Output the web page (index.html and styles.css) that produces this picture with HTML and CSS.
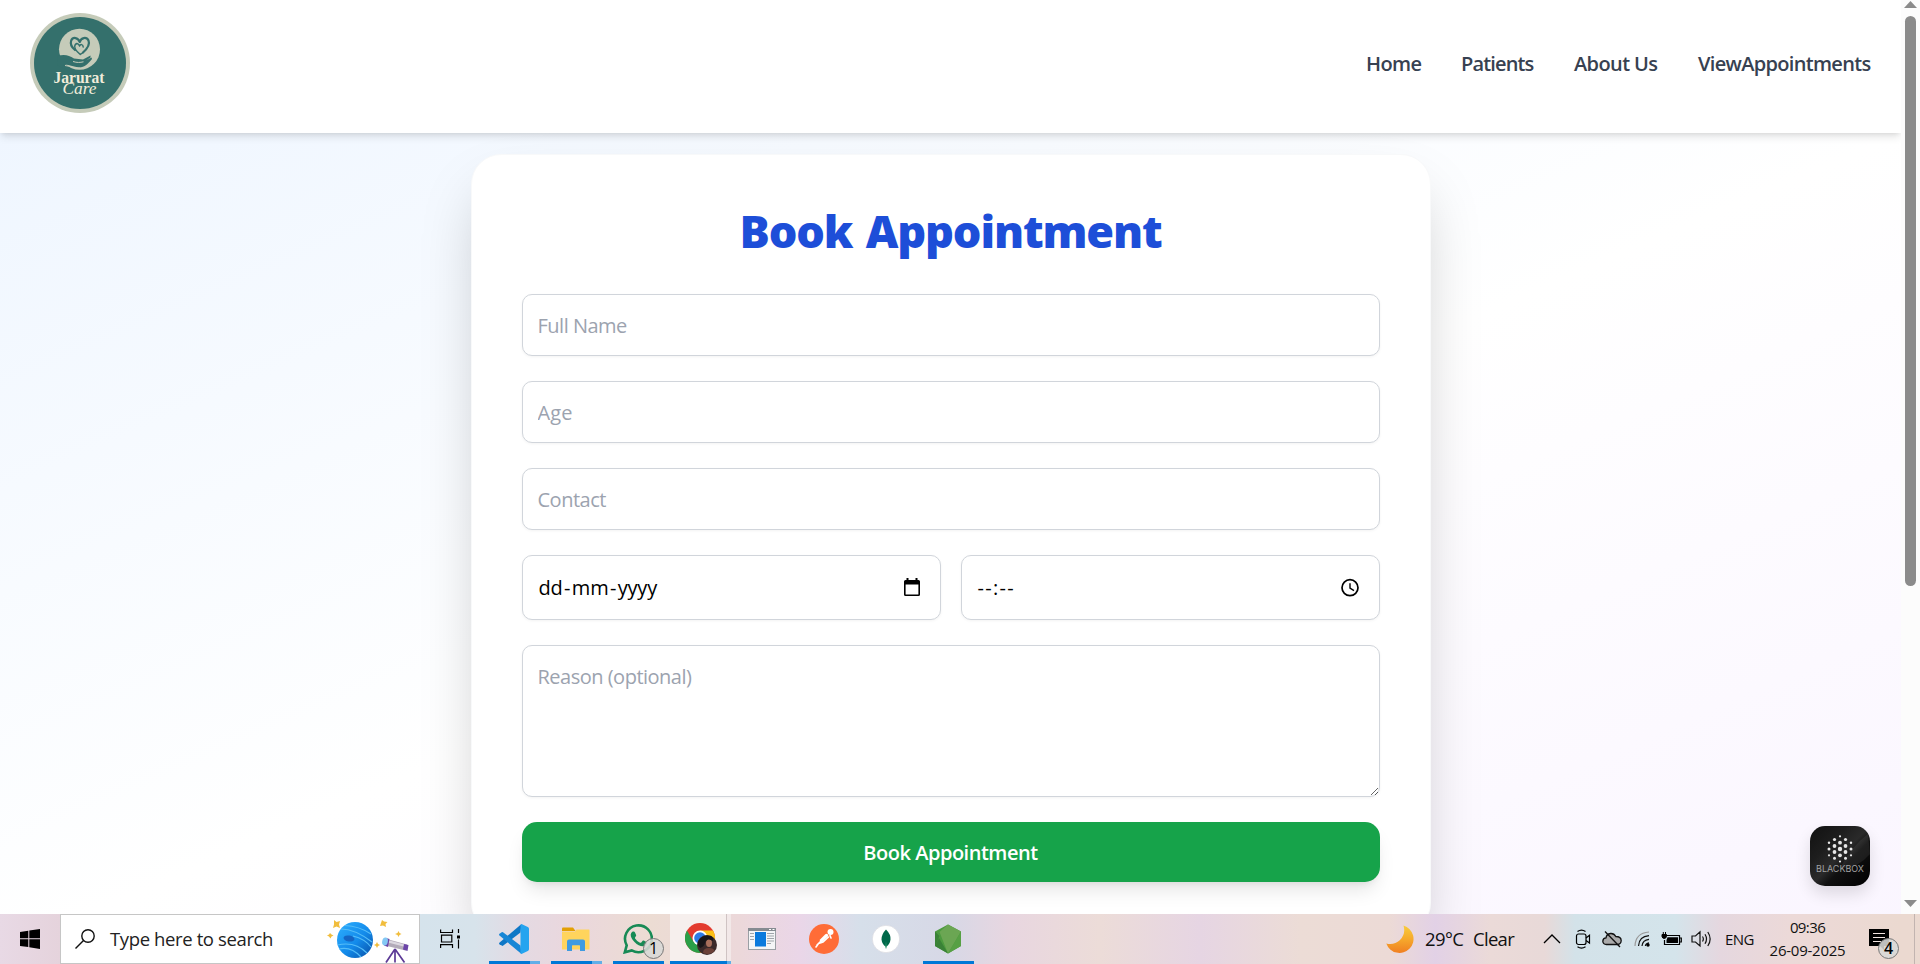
FILE: index.html
```html
<!DOCTYPE html>
<html lang="en">
<head>
<meta charset="utf-8">
<title>Jarurat Care</title>
<link rel="stylesheet" href="styles.css">
</head>
<body>
<div class="viewport">
  <div class="page">
    <header class="header">
      <svg class="logo" width="100" height="100" viewBox="0 0 100 100">
        <circle cx="50" cy="50" r="50" fill="#c5cbb9"/>
        <circle cx="50" cy="50" r="46" fill="#34706c"/>
        <circle cx="49.500" cy="36.300" r="20.500" fill="#c5cbb9"/>
        <g fill="none" stroke="#34706c" stroke-linecap="round" stroke-linejoin="round">
          <path stroke-width="2.200" d="M53 39.500C58 35 60 31 58.500 27.500C56.500 23.500 51 24.500 49.800 29C48 24.500 43 23.500 41.200 27.500C40 31 42 34.500 45 37"/>
          <path stroke-width="1.500" d="M53 39.500L50.300 41.500C45.500 37.500 43.500 34 45.300 31.500C47 29.700 49 31 49.600 33C50.500 31 53 31 53.200 34"/>
        </g>
        <path fill="#34706c" d="M28 42.500C36 41 39 42.500 44 45.500L53 46.500L60.500 42.500L60.500 44.500L56 47.500L61.500 44.500L62 46C58 51 55 54 49 54.500C42 53 38 51.500 33 51.500L35.500 56.500L27 52Z"/>
        <path fill="none" stroke="#c5cbb9" stroke-width="1" d="M43 48.500C47 49.800 50 49.600 53.500 48.800M35 52.500C40 53 44 55.500 50 55"/>
        <text class="logo-name" x="49" y="69.500" text-anchor="middle" textLength="51" lengthAdjust="spacingAndGlyphs">Jarurat</text>
        <text class="logo-care" x="49.500" y="80.800" text-anchor="middle" textLength="34" lengthAdjust="spacingAndGlyphs">Care</text>
      </svg>
      <nav class="nav">
        <a class="nav-home">Home</a><a class="nav-patients">Patients</a><a class="nav-about">About Us</a><a class="nav-view">ViewAppointments</a>
      </nav>
    </header>
    <main class="main">
      <form class="card">
        <h1 class="title">Book Appointment</h1>
        <input class="field" type="text" placeholder="Full Name">
        <input class="field field-age" type="text" placeholder="Age">
        <input class="field" type="text" placeholder="Contact">
        <div class="row">
          <div class="field picker">
            <span class="date-text">dd<span class="dash">-</span>mm<span class="dash">-</span>yyyy</span>
            <svg width="18" height="20" viewBox="0 0 18 20"><path fill="#000" fill-rule="evenodd" d="M3.500 0H5.500V2H12.500V0H14.500V2H15.500Q17 2 17 3.500V16.500Q17 18 15.500 18H2.500Q1 18 1 16.500V3.500Q1 2 2.500 2H3.500ZM2.600 6.500V16.400H15.400V6.500Z"/></svg>
          </div>
          <div class="field picker">
            <span class="time-text">--:--</span>
            <svg width="20" height="20" viewBox="0 0 20 20" fill="none" stroke="#000"><circle cx="10" cy="9.700" r="8" stroke-width="1.700"/><path stroke-width="1.400" d="M10 5.200V10.200L14 12.700"/></svg>
          </div>
        </div>
        <textarea class="field area" placeholder="Reason (optional)"></textarea>
        <button class="submit" type="button">Book Appointment</button>
      </form>
    </main>
    <div class="blackbox">
      <svg width="60" height="60" viewBox="0 0 60 60">
        <defs>
          <linearGradient id="bb" x1="0" y1="0" x2="1" y2="1"><stop offset="0" stop-color="#111"/><stop offset=".3" stop-color="#1d1d1d"/><stop offset=".5" stop-color="#2a2a2a"/><stop offset=".62" stop-color="#101010"/><stop offset="1" stop-color="#000"/></linearGradient>
        </defs>
        <rect width="60" height="60" rx="15" fill="url(#bb)"/>
        <path d="M30 42Q42 20 58 8L60 28Q46 44 30 42Z" fill="#fff" opacity=".07"/>
        <g fill="#e8e8e8">
          <circle cx="30" cy="23" r="2.200"/><circle cx="30" cy="16.700" r="1.900"/><circle cx="30" cy="29.300" r="1.900"/><circle cx="30" cy="10.300" r="1.100"/><circle cx="30" cy="35.500" r="1.100"/>
          <circle cx="24.500" cy="20" r="1.900"/><circle cx="24.500" cy="26" r="1.900"/><circle cx="35.500" cy="20" r="1.900"/><circle cx="35.500" cy="26" r="1.900"/>
          <circle cx="24.500" cy="13.500" r="1.600"/><circle cx="35.500" cy="13.500" r="1.600"/><circle cx="24.500" cy="32.300" r="1.500"/><circle cx="35.500" cy="32.300" r="1.500"/>
          <circle cx="19" cy="16.700" r="1.200"/><circle cx="41" cy="16.700" r="1.200"/><circle cx="19" cy="23" r="1.500"/><circle cx="41" cy="23" r="1.500"/><circle cx="19" cy="29.300" r="1.100"/><circle cx="41" cy="29.300" r="1.100"/>
        </g>
        <text class="bb-text" x="30" y="46.300" text-anchor="middle" textLength="48" lengthAdjust="spacingAndGlyphs">BLACKBOX</text>
      </svg>
    </div>
  </div>
  <div class="scrollbar">
    <svg width="13" height="7" viewBox="0 0 13 7"><path fill="#8b8b8b" d="M0 7L6.500 0L13 7Z"/></svg>
    <div class="thumb"></div>
    <svg width="13" height="7" viewBox="0 0 13 7"><path fill="#8b8b8b" d="M0 0L6.500 7L13 0Z"/></svg>
  </div>
</div>

<footer class="taskbar">
  <div class="start"><svg width="20" height="20" viewBox="0 0 20 20"><path d="M0 3L8.300 1.800V9.300H0ZM9.300 1.600L20 0V9.300H9.300ZM0 10.300H8.300V18L0 16.900ZM9.300 10.300H20V20L9.300 18.200Z"/></svg></div>
  <div class="search">
    <svg width="20" height="20" viewBox="0 0 20 20" fill="none" stroke="#111" stroke-width="1.400"><circle cx="13" cy="7" r="6.200"/><path d="M8.500 11.500L.5 19.500"/></svg>
    <span class="search-text">Type here to search</span>
    <svg class="space" width="84" height="47" viewBox="0 0 84 47">
      <defs><linearGradient id="pl" x1="0" y1="0" x2="1" y2="1"><stop offset="0" stop-color="#2fb0ff"/><stop offset=".55" stop-color="#138aea"/><stop offset="1" stop-color="#0a4ea4"/></linearGradient></defs>
      <circle cx="28" cy="24" r="18" fill="url(#pl)"/>
      <ellipse cx="22" cy="22.500" rx="5.500" ry="3" fill="#1565c4" transform="rotate(10 22 22.500)"/>
      <g fill="none" stroke="#55bdf8" stroke-width="1.200"><path d="M14 13Q28 13 45 26M18 9.500Q32 10 44 18M10.500 29Q28 25 40 37M12 33Q24 30 34 41M26 20Q38 23 44 31"/></g>
      <g fill="#f1bd3c"><path d="M7 4L9.500 6L13 5L12 8.500L13 12L9.500 10.500L6 12L7 8.500Z"/><path d="M3.500 17L5 18.500L7 19.500L5 20.500L4 22.500L2.500 20.500L.5 19.500L2.500 18.500Z" transform="translate(-.5 0)"/><path d="M55 4L57 5.500L60.500 6L58.500 8L59 11L56 9.500L53 10L54 7Z"/><path d="M71.500 15L72.500 17L74.500 18L72.500 19L71.500 21L70.500 19L68 18L70.500 17Z"/><path d="M50 26L51 28L53 29L51 30L50 32L49 30L47 29L49 28Z"/></g>
      <g><path fill="#b3abb9" d="M58 22.500L80 28.500L78.500 34.500L58 29.500Z"/><path fill="#dcd8e0" d="M59 23.500L79 29L78.500 31L59 26Z"/><path fill="#6b45a8" d="M77 28L81.500 29L80.500 35L76 33.500ZM59 22L62.500 23L61 31L57 29.500Z"/><ellipse cx="58" cy="25.500" rx="2.800" ry="4" fill="#84c8f4" transform="rotate(14 58 25.500)"/><path d="M68 33L59 46.500M68 33V46.500M68 33L77.500 46.500" stroke="#5c3a96" stroke-width="1.700" fill="none"/></g>
    </svg>
  </div>
  <div class="start"><svg width="20" height="20" viewBox="0 0 20 20" fill="none" stroke="#000" stroke-width="1.200"><path d="M.6 .5V3.500H12.500V.5M.6 19V15.700H12.500V19M1.500 6.200H11.800V13H1.500ZM18.500 0V4M18.500 10.500V19.500"/><path d="M17 6.500H20V9.500H17Z" fill="#000" stroke="none"/></svg></div>
  <div class="apps">
    <div class="app multi"><svg width="30" height="30" viewBox="0 0 30 30"><path fill="#0f77c6" d="M21.500 8.500L3.600 22L.4 20.300Q-.4 19.400 .6 18.500L22.500 0Z"/><path fill="#1686d6" d="M.5 11.500Q-.4 10.500 .5 9.800L2.700 8.200Q3.300 7.900 4 8.300L21.500 21.500L22.500 30Z"/><path fill="#25a4ef" d="M22.500 0L28.800 3Q30 3.500 30 4.800V25.200Q30 26.500 28.800 27L22.500 30Q21 29.500 21.500 27.500V2.500Q21 .5 22.500 0Z"/></svg></div>
    <div class="app multi"><svg width="28" height="24" viewBox="0 0 28 24"><path fill="#e3a005" d="M0 1.500Q0 .5 1 .5H11L13.500 4H0Z"/><path fill="#ffd45c" d="M0 4.500H13L14.500 2.500H27Q27.500 2.500 27.500 3.500V22.500H0Z"/><path fill="#3f9be0" d="M5 24V14.500Q5 12.500 7 12.500H21Q23 12.500 23 14.500V24H18V19Q18 18.200 17.500 18.200H10.500Q10 18.200 10 19V24Z"/></svg></div>
    <div class="app single"><svg width="30" height="30" viewBox="0 0 30 30"><path fill="none" stroke="#178a55" stroke-width="2.600" d="M1.800 28.300L3.700 21.300A13.400 13.400 0 1 1 8.700 26.400Z"/><path fill="#178a55" d="M9.700 7.500Q11.500 7 12 8.500L13.200 11.300Q13.300 12 12.200 13.200Q11.700 13.800 12.100 14.500Q14 17.500 17 18.700Q17.800 19 18.300 18.400L19.600 16.800Q20.100 16.300 20.800 16.600L23.400 17.900Q23.900 18.200 23.800 18.900Q23.300 22 20 22.300Q16 22.500 11.500 18Q7.500 13.800 7.700 10.500Q8 8.500 9.700 7.500Z"/></svg><span class="badge">1</span></div>
    <div class="app active"><svg width="32" height="32" viewBox="0 0 32 32"><circle cx="15" cy="15" r="15" fill="#e33b2e"/><path fill="#fbc116" d="M15 7.500H28A15 15 0 0 1 15 30L21.500 18.700Z"/><path fill="#2a9f47" d="M2 7.500A15 15 0 0 0 15 30L21.500 18.700L15 15L8.500 18.700Z"/><circle cx="15" cy="15" r="7.500" fill="#fff"/><circle cx="15" cy="15" r="5.800" fill="#2c7be5"/><circle cx="22" cy="22" r="10" fill="#3b2a2a"/><ellipse cx="24" cy="20" rx="3" ry="4" fill="#a9705c"/><path fill="#6b4038" d="M18 30Q18 25 24 25Q29 25 29.500 28Q25 33 18 30Z"/><path fill="#181619" d="M14 17Q18 11 26 13Q29 15 28 18Q22 14 20 20Q19 24 15 25Q11 21 14 17Z"/></svg></div>
    <div class="app"><svg width="28" height="22" viewBox="0 0 28 22"><rect x=".5" y=".5" width="27" height="21" fill="#f4f5f6" stroke="#9a9fa4"/><path fill="#858b91" d="M0 0H28V3H0Z"/><path fill="#fff" d="M21 1H23V2H21ZM24.500 1H26.500V2H24.500Z"/><path stroke="#9fa5aa" d="M2 5.500H6M2 8.500H6M2 11.500H6M19 5.500H26M19 8H26M19 10.500H26M19 13H26M19 15.500H23"/><path fill="#0a7add" d="M7 4H18V18.500H7Z"/></svg></div>
    <div class="app"><svg width="30" height="30" viewBox="0 0 30 30"><circle cx="15" cy="15" r="15" fill="#ff6c37"/><circle cx="21.500" cy="8" r="3" fill="#fff"/><path fill="none" stroke="#fff" stroke-width="3.400" stroke-linecap="round" d="M17.500 11.500L12.500 16.500"/><path fill="none" stroke="#fff" stroke-width="1.600" stroke-linecap="round" d="M19.500 13L14 18L9.500 19.500L7 23M12 17L8 21M21 11.500L22 14"/></svg></div>
    <div class="app"><svg width="28" height="28" viewBox="0 0 28 28"><circle cx="14" cy="14" r="13.700" fill="#fff" stroke="#d4d4da" stroke-width=".6"/><path fill="#00684a" d="M14 4.500Q19 9.500 18.500 14.500Q18 19 14.500 21.500L14 24L13.500 21.500Q10 19 9.500 14.500Q9.500 9 14 4.500Z"/><path fill="#3fae7c" d="M14 16L14.500 21.500L14 24L13.500 21.500Z"/></svg></div>
    <div class="app single"><svg width="26" height="30" viewBox="0 0 26 30"><path fill="#4c9a3f" d="M13 .5L26 7.500V22L13 29.500L0 22V7.500Z"/><path fill="#3a8237" d="M0 7.500L4.500 12L0 22ZM0 22L4 14L13 29.500Z"/><path fill="#6ba653" d="M13 .5L26 7.500L13 29.500L4.500 8Z"/><path fill="#57a044" d="M26 7.500V22L13 29.500Z"/></svg></div>
  </div>
  <div class="tray">
    <svg class="moon" width="28" height="28" viewBox="0 0 28 28"><defs><linearGradient id="mn" x1="0" y1="0" x2="0" y2="1"><stop offset="0" stop-color="#f8cc3c"/><stop offset=".5" stop-color="#f6a92c"/><stop offset="1" stop-color="#f07f22"/></linearGradient></defs><path fill="url(#mn)" d="M17.500 .5A14 14 0 1 1 .3 18.500Q8 20.500 14 15Q20 9 17.500 .5Z"/></svg>
    <span class="temp">29°C</span><span class="sky">Clear</span>
    <svg class="chev" width="18" height="10" viewBox="0 0 18 10" fill="none" stroke="#000" stroke-width="1.300"><path d="M1 9L9 1L17 9"/></svg>
    <svg class="cam" width="16" height="20" viewBox="0 0 16 20" fill="none" stroke="#000" stroke-width="1.200"><rect x="1.500" y="5" width="9.500" height="10.500" rx="2"/><path d="M11 9L14.500 6.200V14L11 11.500M2.500 2.500Q6.500 -.3 10.500 2.500M2.500 17.800Q6.500 20.500 10.500 17.800"/></svg>
    <svg class="cloud" width="20" height="18" viewBox="0 0 20 18" fill="none" stroke="#111" stroke-width="1.300"><path fill="#aaa" d="M4.500 14.500Q1 14.300 .8 11.200Q1 8 4 7.800Q4.500 4 8.500 3.500Q12 3.200 13.800 6.500Q19 6.500 19.200 10.500Q19 14.300 15.500 14.500Z"/><path d="M3 1.500L18 17"/></svg>
    <svg class="wifi" width="17" height="16" viewBox="0 0 17 16" fill="none" stroke="#111" stroke-width="1.200"><path stroke="#999" d="M1 15Q1.500 2 15 1"/><path d="M4.500 15Q5 5.500 15 4.700M8 15Q8.500 9 15 8.300M11.300 15Q11.800 12.500 15 11.800"/><circle cx="14" cy="14" r="1.700" fill="#000" stroke="none"/></svg>
    <svg class="batt" width="21" height="15" viewBox="0 0 21 15" fill="none" stroke="#000" stroke-width="1.200"><path d="M6 3.500H18.500V12.500H3.500V8M18.500 6H20.300V10H18.500"/><path fill="#000" stroke="none" d="M6.500 5.200H17V11H5.500V8Z"/><path fill="#000" stroke-width="1" d="M1 2.500H5.500V4.500Q5 6.500 3.300 6.500Q1.500 6.500 1 4.500ZM2.300 0V2.500M4.500 0V2.500"/></svg>
    <svg class="spk" width="21" height="18" viewBox="0 0 21 18" fill="none" stroke="#111" stroke-width="1.200"><path d="M1 6H4.500L9 1.800V16L4.500 12H1ZM11.500 6.500Q13.200 9 11.500 11.500M14 4.200Q17 9 14 13.800M16.800 2Q21.500 9 16.800 16"/></svg>
    <span class="lang">ENG</span>
    <div class="clock"><span class="hour">09:36</span><span class="day">26-09-2025</span></div>
    <div class="note"><svg width="20" height="21" viewBox="0 0 20 21"><path d="M0 0H20V17H15V21L11 17H0Z"/><path stroke="#f1e3df" stroke-width="1.200" d="M4 4.500H16M4 8.500H16M4 12.500H12"/></svg><span class="badge note-badge">4</span></div>
  </div>
</footer>
</body>
</html>
```
FILE: styles.css
```css
* { box-sizing: border-box; }
body {
  margin: 0;
  height: 964px;
  overflow: hidden;
  display: flex;
  flex-direction: column;
  font-family: "Open Sans", "Noto Sans", sans-serif;
  background: #fff;
}
svg { display: block; flex: none; }
.viewport { height: 914px; display: flex; overflow: hidden; }
.page { width: 1901px; height: 914px; position: relative; overflow: hidden; }

.header {
  position: relative;
  z-index: 1;
  height: 133px;
  padding: 13px 30px 20px;
  display: flex;
  justify-content: space-between;
  align-items: center;
  background: #fff;
  box-shadow: 0 5px 8px -1px rgba(0,0,0,.1), 0 2px 5px -2px rgba(0,0,0,.1);
}
.logo-name { font: bold 17px "Liberation Serif", serif; fill: #f1ecda; }
.logo-care { font: italic 16px "Liberation Serif", serif; fill: #f1ecda; }
.nav { display: flex; gap: 40px; padding-top: 2px; font-size: 20px; font-weight: 600; line-height: 30px; color: #374151; white-space: nowrap; }
.nav-home { width: 55px; letter-spacing: -.6px; }
.nav-patients { width: 73px; letter-spacing: -.85px; }
.nav-about { width: 84px; letter-spacing: -.6px; }
.nav-view { width: 173px; letter-spacing: -.68px; }

.main {
  height: 820px;
  padding: 21px 0 0;
  display: flex;
  justify-content: center;
  align-items: flex-start;
  background: linear-gradient(to bottom right, #eff6ff, #fff, #faf5ff);
}
.card {
  width: 960px;
  height: 779px;
  padding: 50px;
  border: 1px solid #f8f9fa;
  border-radius: 30px;
  background: #fff;
  box-shadow: 0 31px 62px -15px rgba(0,0,0,.25);
  display: flex;
  flex-direction: column;
  gap: 25px;
}
.title {
  margin: 1px 0 13px;
  font-size: 45px;
  line-height: 50px;
  font-weight: 800;
  text-align: center;
  color: #1d4ed8;
  white-space: nowrap;
  letter-spacing: -1.15px;
  word-spacing: 3px;
}
.field {
  flex: none;
  width: 100%;
  height: 62px;
  padding: 15px;
  border: 1px solid #d1d5db;
  border-radius: 10px;
  background: #fff;
  box-shadow: 0 1px 3px rgba(0,0,0,.05);
  font-family: inherit;
  font-size: 20px;
  line-height: 30px;
  color: #000;
  outline: none;
}
.field::placeholder { color: #9ca3af; opacity: 1; letter-spacing: -.5px; }
.field-age::placeholder { letter-spacing: .1px; }
.row { display: grid; grid-template-columns: 1fr 1fr; gap: 20px; }
.picker { height: 65px; padding: 1px 19px 0 16px; display: flex; align-items: center; justify-content: space-between; }
.dash { margin: 0 1.500px; }
.date-text { letter-spacing: -.2px; }
.time-text { letter-spacing: 1.300px; }
.area { height: 152px; padding-top: 16px; resize: vertical; display: block; }
.submit {
  flex: none;
  height: 60px;
  padding-top: 2px;
  border: 0;
  border-radius: 15px;
  background: #16a34a;
  color: #fff;
  font: 600 20px/30px "Open Sans", sans-serif;
  letter-spacing: -.48px;
  box-shadow: 0 12px 19px -4px rgba(0,0,0,.1), 0 5px 8px -5px rgba(0,0,0,.1);
}
.blackbox {
  position: absolute;
  left: 1810px;
  top: 826px;
  width: 60px;
  height: 60px;
  border-radius: 15px;
  box-shadow: 0 8px 16px rgba(0,0,0,.12);
}
.bb-text { font: 8.500px Inter, sans-serif; fill: #a2a2a2; }

.scrollbar { width: 19px; background: #fcfcfc; display: flex; flex-direction: column; align-items: center; padding: 1px 0 7px; }
.thumb { width: 11px; height: 570px; margin: 8px 0 auto; border-radius: 6px; background: #8b8b8b; }

.taskbar {
  height: 50px;
  display: flex;
  align-items: stretch;
  background: linear-gradient(90deg, #e8d9e5 0, #e5d3dc 60px, #d5e3ec 420px, #d7e3eb 475px, #e4dae3 520px, #ead7dd 570px, #ecdcd3 650px, #ecd8da 740px, #ead6e8 800px, #d6dfea 860px, #d7d8e6 950px, #e8d6e0 1010px, #ecdcd8 1100px, #e6d5e3 1200px, #ecdcd6 1300px, #ecdad6 1390px, #e2d1e6 1435px, #ebdad8 1490px, #e8d9d8 1545px, #d3e2e9 1575px, #d4e4eb 1675px, #e5d7df 1720px, #ecd9d8 1790px, #ebd9d0 1900px);
  color: #111;
}
.start { width: 60px; display: flex; align-items: center; justify-content: center; }
.search {
  width: 360px;
  border: 1px solid #c6c6c6;
  background: #fff;
  display: flex;
  align-items: center;
  padding-left: 14px;
}
.search-text { width: 163px; margin: 0 54px 0 15px; font-size: 18.500px; line-height: 26px; white-space: nowrap; letter-spacing: -.38px; color: #222; }
.apps { display: flex; margin-left: 3px; }
.app { width: 62px; position: relative; display: flex; align-items: center; justify-content: center; }
.app.multi::after, .app.single::after {
  content: "";
  position: absolute;
  left: 6px;
  bottom: 0;
  width: 51px;
  height: 3px;
  background: #0078d7;
}
.app.multi::after { background: linear-gradient(90deg, #0078d7 41px, #62aee8 41px); }
.app.active {
  border-left: 1px solid transparent;
  background: linear-gradient(90deg, #f6efed 56px, #cfc3c3 56px, #cfc3c3 57px, #f2e8e8 57px) padding-box;
}
.app.active::after {
  content: "";
  position: absolute;
  left: 0;
  bottom: 0;
  width: 61px;
  height: 3px;
  background: linear-gradient(90deg, #0078d7 57px, #62aee8 57px);
}
.badge {
  position: absolute;
  left: 36px;
  top: 24px;
  width: 21px;
  height: 21px;
  border: 1px solid #777;
  border-radius: 50%;
  background: rgba(216,216,214,.88);
  font-size: 16px;
  line-height: 19px;
  text-align: center;
  color: #000;
}
.tray { margin-left: auto; width: 534px; height: 50px; display: flex; align-items: center; white-space: nowrap; border-right: 5px solid transparent; }
.temp { width: 37px; margin-left: 11px; font-size: 18.500px; line-height: 26px; letter-spacing: -.6px; }
.sky { width: 40px; margin-left: 11px; font-size: 18.500px; line-height: 26px; letter-spacing: -.7px; }
.chev { margin-left: 30px; }
.cam { margin-left: 14px; }
.cloud { margin-left: 11px; }
.wifi { margin-left: 12px; }
.batt { margin-left: 10px; }
.spk { margin-left: 9px; }
.lang { width: 28px; margin-left: 13px; font-size: 15px; letter-spacing: -.6px; }
.clock { width: 75px; margin-left: 17px; display: flex; flex-direction: column; align-items: center; font-size: 15px; line-height: 23px; }
.hour { letter-spacing: -.6px; }
.day { letter-spacing: -.25px; }
.note { position: relative; width: 46px; margin-left: 24px; height: 50px; padding-top: 15px; border-right: 1px solid #c2b4b0; }
.note-badge { left: 9px; font-weight: 600; }
```
